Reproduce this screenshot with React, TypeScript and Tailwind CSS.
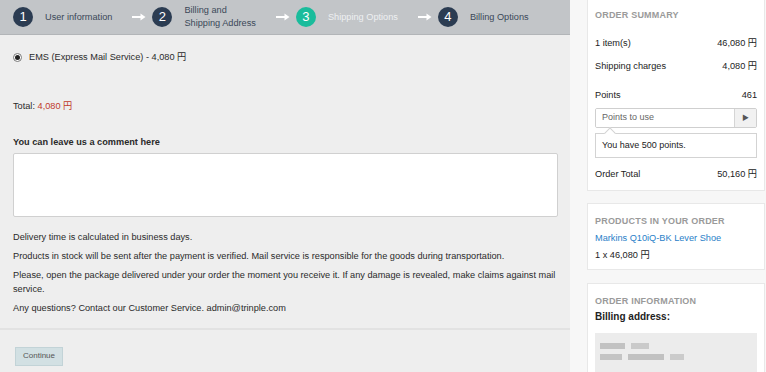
const font = { fontFamily: '"Liberation Sans", "Noto Sans CJK JP", sans-serif' };

const Step = ({ n, label, active }: { n: number; label: React.ReactNode; active?: boolean }) => (
  <div className="flex items-center gap-[12px]">
    <div
      className={`w-[20px] h-[20px] rounded-full flex items-center justify-center text-white text-[13px] ${
        active ? "bg-[#1abc9c]" : "bg-[#2b3c52]"
      }`}
    >
      {n}
    </div>
    <div className={`text-[9.2px] leading-[13px] ${active ? "text-[#eef0f2]" : "text-[#3b4858]"}`}>{label}</div>
  </div>
);

const Arrow = () => (
  <svg width="14" height="8" viewBox="0 0 14 8" className="ml-[20px] mr-[6px]">
    <path d="M0 4h10" stroke="white" strokeWidth="2" />
    <path d="M8.5 0.5L13.5 4L8.5 7.5z" fill="white" />
  </svg>
);

const Row = ({ label, value }: { label: string; value: string }) => (
  <div className="flex justify-between text-[9.2px] leading-[12px] text-[#222]">
    <span>{label}</span>
    <span>{value}</span>
  </div>
);

const Title = ({ children }: { children: React.ReactNode }) => (
  <div className="text-[9px] leading-[12px] font-bold text-[#9a9a9a] tracking-[0.2px]">{children}</div>
);

export default function App() {
  return (
    <div style={font} className="w-[766px] h-[372px] overflow-hidden flex bg-[#f7f7f7]">
      <div className="w-[570px] shrink-0 flex flex-col bg-[#eeeeee]">
        <div className="h-[35px] shrink-0 bg-[#c2c5c8] border-b border-[#b2b5b8] flex items-center pl-[13px]">
          <Step n={1} label="User information" />
          <Arrow />
          <Step n={2} label={<>Billing and<br />Shipping Address</>} />
          <Arrow />
          <Step n={3} label="Shipping Options" active />
          <Arrow />
          <Step n={4} label="Billing Options" />
        </div>

        <div className="px-[13px] text-[9.2px] leading-[12px] text-[#2a2a2a]">
          <label className="flex items-center gap-[7px] mt-[16px] h-[12px]">
            <span className="w-[9px] h-[9px] rounded-full border border-[#777] bg-white flex items-center justify-center">
              <span className="w-[5px] h-[5px] rounded-full bg-[#222]" />
            </span>
            <span>EMS (Express Mail Service) - 4,080 円</span>
          </label>

          <div className="mt-[37px] h-[12px]">
            Total: <span className="text-[#c0392b]">4,080 円</span>
          </div>

          <div className="mt-[24px] font-bold h-[12px]">You can leave us a comment here</div>
          <textarea className="mt-[5px] block w-[545px] h-[64px] bg-white border border-[#d0d0d0] rounded-[2px] resize-none outline-none" />

          <div className="mt-[13px] leading-[14px] flex flex-col gap-[5px]">
            <p>Delivery time is calculated in business days.</p>
            <p>Products in stock will be sent after the payment is verified. Mail service is responsible for the goods during transportation.</p>
            <p>Please, open the package delivered under your order the moment you receive it. If any damage is revealed, make claims against mail service.</p>
            <p>Any questions? Contact our Customer Service. admin@trinple.com</p>
          </div>
        </div>

        <div className="mt-[13px] border-t-2 border-[#e2e2e2] px-[15px] pt-[11px]">
          <button className="w-[48px] h-[19px] bg-[#d2e0e3] border border-[#c2d3d7] text-[8px] text-[#555]">
            Continue
          </button>
        </div>
      </div>

      <div className="flex-1 pl-[17px] flex flex-col">
        <div className="w-[178px] h-[191px] shrink-0 bg-white border border-[#e8e8e8] border-t-0 px-[7px] pt-[9px]">
          <Title>ORDER SUMMARY</Title>
          <div className="mt-[16px]">
            <Row label="1 item(s)" value="46,080 円" />
          </div>
          <div className="mt-[11px]">
            <Row label="Shipping charges" value="4,080 円" />
          </div>
          <div className="mt-[17px]">
            <Row label="Points" value="461" />
          </div>
          <div className="mt-[7px] flex h-[20px] border border-[#cfcfcf] rounded-[2px] overflow-hidden">
            <input
              placeholder="Points to use"
              className="flex-1 min-w-0 px-[6px] text-[9px] text-[#333] placeholder:text-[#666] outline-none bg-white"
            />
            <div className="w-[22px] border-l border-[#d5d5d5] bg-[#f1f1f1] flex items-center justify-center text-[7px] text-[#555]">
              ▶
            </div>
          </div>
          <div className="mt-[5px] h-[25px] border border-[#d3d3d3] flex items-center px-[6px] text-[9px] text-[#222] relative">
            <span className="absolute -top-[5px] left-[10px] w-[8px] h-[8px] bg-white border-l border-t border-[#d3d3d3] rotate-45" />
            You have 500 points.
          </div>
          <div className="mt-[10px]">
            <Row label="Order Total" value="50,160 円" />
          </div>
        </div>

        <div className="mt-[12px] w-[178px] h-[67px] shrink-0 bg-white border border-[#e8e8e8] px-[7px] pt-[11px]">
          <Title>PRODUCTS IN YOUR ORDER</Title>
          <div className="mt-[5px] text-[9.2px] leading-[12px] text-[#2a80c8]">Markins Q10iQ-BK Lever Shoe</div>
          <div className="mt-[5px] text-[9.2px] leading-[12px] text-[#222]">1 x 46,080 円</div>
        </div>

        <div className="mt-[13px] w-[178px] flex-1 bg-white border border-[#e8e8e8] px-[7px] pt-[11px]">
          <Title>ORDER INFORMATION</Title>
          <div className="mt-[4px] text-[10px] leading-[12px] font-bold text-[#222]">Billing address:</div>
          <div className="mt-[10px] h-[60px] bg-[#ececec] px-[5px] pt-[10px] flex flex-col gap-[5px] blur-[0.7px]">
            <div className="flex gap-[6px]">
              <div className="w-[25px] h-[6px] bg-[#c2c2c2]" />
              <div className="w-[18px] h-[6px] bg-[#cacaca]" />
            </div>
            <div className="flex gap-[6px]">
              <div className="w-[22px] h-[6px] bg-[#c4c4c4]" />
              <div className="w-[36px] h-[6px] bg-[#c1c1c1]" />
              <div className="w-[14px] h-[6px] bg-[#cbcbcb]" />
            </div>
          </div>
        </div>
      </div>
    </div>
  );
}
